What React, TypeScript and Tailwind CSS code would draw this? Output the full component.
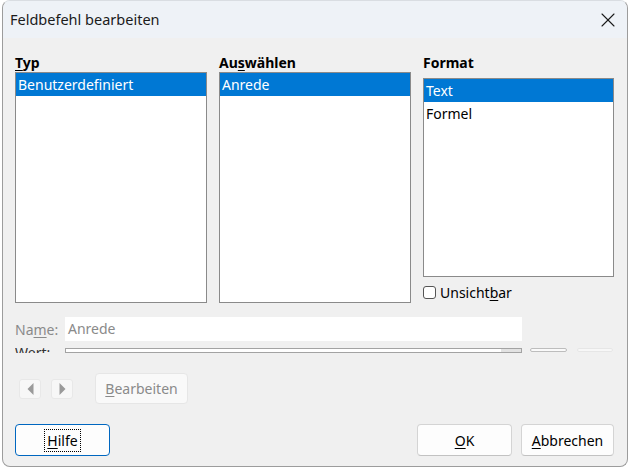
import { X } from 'lucide-react'

const typItems = ['Benutzerdefiniert']
const auswahlItems = ['Anrede']
const formatItems = ['Text', 'Formel']

function ListBox({ items, selected, className }: { items: string[]; selected: number; className: string }) {
  return (
    <div className={`border border-[#8a8a8a] bg-white ${className}`}>
      {items.map((it, i) => (
        <div
          key={it}
          className={`h-[23px] leading-[23px] pl-[2px] ${i === selected ? 'bg-[#0078d4] text-white' : 'text-black'}`}>
          {it}
        </div>
      ))}
    </div>
  )
}

function ArrowButton({ dir }: { dir: 'left' | 'right' }) {
  return (
    <div className="w-[22px] h-[20px] rounded-[3px] bg-[#f7f7f7] border border-[#e8e8e8] flex items-center justify-center">
      <svg width="7" height="12" viewBox="0 0 7 12">
        {dir === 'left' ? <polygon points="6.5,0 0.5,6 6.5,12" fill="#9a9a9a" /> : <polygon points="0.5,0 6.5,6 0.5,12" fill="#9a9a9a" />}
      </svg>
    </div>
  )
}

export default function App() {
  return (
    <div className="w-[630px] h-[471px] bg-white overflow-hidden [font-family:'Noto_Sans',sans-serif] text-[14px] text-black">
      <div className="ml-[2px] w-[626px] h-[467px] rounded-[8px] border border-[#9c9c9c] border-t-[#d9dde2] bg-[#f0f0f0] overflow-hidden flex flex-col">
        {/* title bar */}
        <div className="h-[37px] shrink-0 bg-[#eef2f7] flex items-center justify-between pl-[7px] pr-[7px]">
          <span className="text-[14.5px] text-[#1b1b1b] leading-[20px] pb-[1px]">Feldbefehl bearbeiten</span>
          <X size={24} strokeWidth={1.1} className="text-[#1b1b1b] mt-[1px]" />
        </div>

        <div className="flex flex-col pl-[12px] pr-[13px]">
          {/* three columns */}
          <div className="flex gap-[12px] mt-[15px]">
            <div className="w-[192px] flex flex-col">
              <div className="font-bold leading-[19px]"><span className="underline underline-offset-[2px]">T</span>yp</div>
              <ListBox items={typItems} selected={0} className="h-[231px]" />
            </div>
            <div className="w-[192px] flex flex-col">
              <div className="font-bold leading-[19px]">Au<span className="underline underline-offset-[2px]">s</span>wählen</div>
              <ListBox items={auswahlItems} selected={0} className="h-[231px]" />
            </div>
            <div className="w-[191px] flex flex-col">
              <div className="font-bold leading-[19px]">Format</div>
              <ListBox items={formatItems} selected={0} className="h-[199px] mt-[6px]" />
              <label className="flex items-center gap-[4px] mt-[6px] leading-[19px]">
                <span className="w-[13px] h-[13px] rounded-[3px] border border-[#555] bg-white" />
                <span>Unsicht<span className="underline underline-offset-[2px]">b</span>ar</span>
              </label>
            </div>
          </div>

          {/* name row */}
          <div className="flex items-center mt-[14px] h-[24px]">
            <span className="w-[50px] text-[#8a8a8a]">Na<span className="underline underline-offset-[2px]">m</span>e:</span>
            <div className="w-[457px] h-[24px] bg-white text-[#8a8a8a] leading-[24px] pl-[3px]">Anrede</div>
          </div>

          {/* wert row, cut off by the dialog layout */}
          <div className="mt-[7px] h-[5px] overflow-hidden flex items-start">
            <span className="w-[50px] text-[#333] leading-[19px] -mt-[5px]">Wert:</span>
            <div className="w-[457px] h-[5px] border border-[#a3a3a3] bg-white flex justify-end">
              <div className="w-[20px] bg-[#e2e2e2]" />
            </div>
            <div className="ml-[8px] w-[37px] h-[4px] rounded-[2px] border border-[#bdbdbd] bg-[#fafafa]" />
            <div className="ml-[10px] w-[36px] h-[4px] rounded-[2px] border border-[#e6e6e6] bg-[#f7f7f7]" />
          </div>

          {/* nav row */}
          <div className="flex items-center mt-[20px] pl-[4px]">
            <ArrowButton dir="left" />
            <div className="ml-[10px]"><ArrowButton dir="right" /></div>
            <div className="ml-[22px] w-[93px] h-[31px] rounded-[4px] bg-[#f9f9f9] border border-[#e6e6e6] text-[#8a8a8a] flex items-center justify-center">
              <span><span className="underline underline-offset-[2px]">B</span>earbeiten</span>
            </div>
          </div>

          {/* bottom buttons */}
          <div className="flex items-center mt-[20px]">
            <div className="w-[95px] h-[32px] rounded-[4px] border border-[#0067c0] bg-[#fdfdfd] flex items-center justify-center">
              <span className="outline-1 outline-dotted outline-black px-[2px] leading-[21px]">
                <span className="underline underline-offset-[2px]">H</span>ilfe
              </span>
            </div>
            <div className="ml-auto w-[95px] h-[32px] rounded-[4px] border border-[#d4d4d4] border-b-[#c2c2c2] bg-[#fdfdfd] flex items-center justify-center">
              <span><span className="underline underline-offset-[2px]">O</span>K</span>
            </div>
            <div className="ml-[9px] w-[93px] h-[32px] rounded-[4px] border border-[#d4d4d4] border-b-[#c2c2c2] bg-[#fdfdfd] flex items-center justify-center">
              <span><span className="underline underline-offset-[2px]">A</span>bbrechen</span>
            </div>
          </div>
        </div>
      </div>
    </div>
  )
}
